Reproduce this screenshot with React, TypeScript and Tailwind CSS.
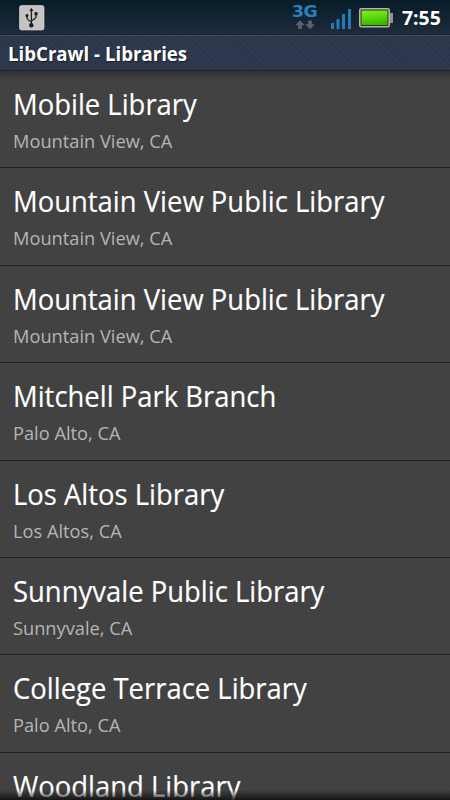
const libraries = [
  { name: 'Mobile Library', city: 'Mountain View, CA' },
  { name: 'Mountain View Public Library', city: 'Mountain View, CA' },
  { name: 'Mountain View Public Library', city: 'Mountain View, CA' },
  { name: 'Mitchell Park Branch', city: 'Palo Alto, CA' },
  { name: 'Los Altos Library', city: 'Los Altos, CA' },
  { name: 'Sunnyvale Public Library', city: 'Sunnyvale, CA' },
  { name: 'College Terrace Library', city: 'Palo Alto, CA' },
  { name: 'Woodland Library', city: '' },
];

function UsbIcon() {
  return (
    <svg className="ml-[19px] h-[26px] w-[26px]" viewBox="0 0 26 26">
      <rect x="0.5" y="0.5" width="24.5" height="24.5" rx="2" fill="#c4c4c4" stroke="#dedede" strokeWidth="0.6" />
      <g stroke="#1d1d1d" fill="none" strokeWidth="1.3">
        <path d="M12.4 5v15" />
        <path d="M8 10.500v2q0 2.300 4.400 4.500" />
        <path d="M17 8.800v2.700q0 2.300-4.600 4.100" />
      </g>
      <g fill="#1d1d1d">
        <path d="M12.4 2.8l2 3.2h-4z" />
        <circle cx="8" cy="10.400" r="1.5" />
        <rect x="15.5" y="7.2" width="3" height="3" />
        <circle cx="12.3" cy="20.2" r="2.2" />
      </g>
    </svg>
  );
}

function NetworkIcon() {
  return (
    <div className="flex w-[28px] flex-col items-center">
      <span className="h-[12px] origin-center scale-x-[1.08] font-['DejaVu_Sans'] text-[16px] leading-[12px] font-bold tracking-[-0.5px] text-[#2683bb]">
        3G
      </span>
      <svg className="mt-[2px] h-[10px] w-[20px]" viewBox="0 0 20 10" fill="#59636e">
        <path d="M5 0.3l4.800 4.900H6.800v3.800H3.200V5.200H.2z" />
        <path d="M15 9.200l4.800-4.900H16.800V.5H13.200v3.800H10.200z" />
      </svg>
    </div>
  );
}

function SignalIcon() {
  return (
    <svg className="h-[20px] w-[20px]" viewBox="0 0 20 20" fill="#237cb2">
      <rect x="0" y="14" width="3" height="6" />
      <rect x="5.500" y="10" width="3" height="10" />
      <rect x="11" y="5" width="3" height="15" />
      <rect x="17" y="0" width="3" height="20" />
    </svg>
  );
}

function BatteryIcon() {
  return (
    <svg className="h-[20px] w-[34px]" viewBox="0 0 34 20">
      <defs>
        <linearGradient id="charge" x1="0" y1="0" x2="0.2" y2="1">
          <stop offset="0" stopColor="#8be82a" />
          <stop offset="0.5" stopColor="#5fd90c" />
          <stop offset="1" stopColor="#3cb800" />
        </linearGradient>
      </defs>
      <rect x="31" y="5" width="3" height="10" fill="#929292" />
      <rect x="0.8" y="0.8" width="29.400" height="18" rx="1.500" fill="#173b0b" stroke="#b5b5b5" strokeWidth="1.600" />
      <rect x="2.500" y="2.500" width="26" height="14.500" fill="url(#charge)" />
    </svg>
  );
}

export default function App() {
  return (
    <div className="relative h-[800px] w-[450px] overflow-hidden bg-[#424242] font-['Open_Sans','Noto_Sans',sans-serif] text-white">
      <header className="flex h-[35px] items-start border-b border-[#182230] bg-linear-to-b from-[#071c29] to-[#1e2b3c]">
        <div className="mt-[5px]"><UsbIcon /></div>
        <div className="mt-[6px] ml-auto"><NetworkIcon /></div>
        <div className="mt-[9px] ml-[12px]"><SignalIcon /></div>
        <div className="mt-[8px] ml-[8px]"><BatteryIcon /></div>
        <span className="mt-[4px] mr-[9px] ml-[9px] w-[39px] origin-left scale-x-[0.97] text-[20px] leading-[28px] font-bold whitespace-nowrap">7:55</span>
      </header>
      <div className="flex h-[36px] items-start border-t border-[#404a5c] border-b border-b-[#1b2430] bg-[#2a374c] bg-[repeating-linear-gradient(45deg,#2a364b_0px,#2a364b_2px,#2f3a4f_2px,#2f3a4f_4px)] pt-[4px] pl-[8px]">
        <h1 className="origin-left scale-x-[0.956] text-[19.500px] leading-[28px] font-bold whitespace-nowrap [text-shadow:1px_1px_1px_#111a]">
          LibCrawl - Libraries
        </h1>
      </div>
      <ul className="bg-[linear-gradient(#303030,#424242_9px)]">
        {libraries.map((library, i) => (
          <li key={i} className="flex h-[97.400px] flex-col items-start border-b border-[#222222] pt-[13px] pl-[13px]">
            <span className="origin-left scale-x-[0.930] text-[29.500px] leading-[40px] whitespace-nowrap [-webkit-text-stroke:0.15px_white]">{library.name}</span>
            <span className="mt-[4px] origin-left scale-x-[0.960] text-[19px] leading-[26px] whitespace-nowrap text-[#b5b5b5]">{library.city}</span>
          </li>
        ))}
      </ul>
      <div className="absolute inset-x-0 bottom-0 h-[10px] bg-linear-to-b from-transparent to-[#111111]/90" />
    </div>
  );
}
